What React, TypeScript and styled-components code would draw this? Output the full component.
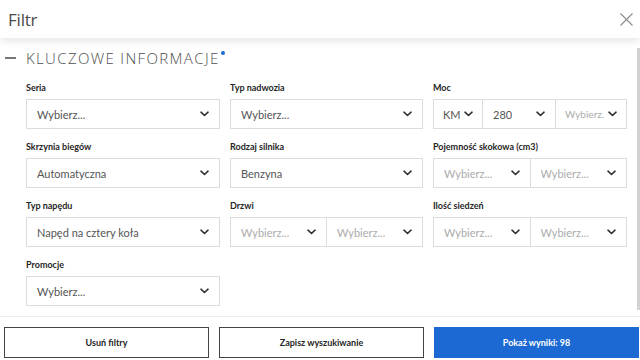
import React from "react";
import styled, { createGlobalStyle } from "styled-components";

const Global = createGlobalStyle`
  html, body { margin: 0; padding: 0; background: #fff; }
  body { font-family: Lato, "Open Sans", "Liberation Sans", sans-serif; color: #333; }
  * { box-sizing: border-box; }
`;

const Modal = styled.div`
  width: 640px;
  height: 360px;
  display: flex;
  flex-direction: column;
  background: #fff;
  overflow: hidden;
`;

const Header = styled.header`
  height: 38px;
  flex: none;
  display: flex;
  align-items: center;
  justify-content: space-between;
  padding: 0 6px 0 8px;
  background: #fff;
  box-shadow: 0 3px 8px rgba(0, 0, 0, 0.1);
  position: relative;
  z-index: 2;
`;

const Title = styled.h1`
  margin: 0;
  font-family: "Open Sans", Lato, sans-serif;
  font-weight: 400;
  font-size: 17px;
  color: #4a4a4a;
  letter-spacing: -0.2px;
`;

const CloseButton = styled.button`
  border: none;
  background: none;
  padding: 0;
  width: 16px;
  height: 16px;
  display: flex;
  align-items: center;
  justify-content: center;
  color: #8a8a8a;
`;

const Body = styled.div`
  flex: 1;
  position: relative;
  min-height: 0;
  display: flex;
`;

const Content = styled.main`
  flex: 1;
  overflow: hidden;
  padding: 10px 0 0 5px;
`;

const ScrollThumb = styled.div`
  position: absolute;
  right: 0;
  top: 10px;
  width: 3px;
  height: 262px;
  background: #d2d2d2;
`;

const SectionTitle = styled.h2`
  margin: 0;
  display: flex;
  align-items: center;
  height: 20px;
  font-family: "Open Sans", Lato, sans-serif;
  font-weight: 300;
  font-size: 15px;
  letter-spacing: 1.35px;
  color: #4d4d4d;
`;

const Dash = styled.span`
  width: 11px;
  height: 1.5px;
  background: #777;
  margin-right: 10px;
`;

const Dot = styled.span`
  width: 4px;
  height: 4px;
  border-radius: 50%;
  background: #1c69d4;
  align-self: flex-start;
  margin-top: 3px;
  margin-left: 1px;
`;

const Grid = styled.div`
  display: grid;
  grid-template-columns: 194px 193px 194px;
  column-gap: 10px;
  row-gap: 11px;
  padding-left: 21px;
  margin-top: 13px;
`;

const Field = styled.div`
  display: flex;
  flex-direction: column;
`;

const Label = styled.label`
  font-size: 9px;
  font-weight: 700;
  line-height: 14px;
  color: #262626;
  margin-bottom: 4px;
`;

const Group = styled.div`
  display: flex;
  height: 30px;
`;

const Select = styled.div<{ $w?: number; $muted?: boolean; $pad?: number; $small?: boolean }>`
  flex: ${(p) => (p.$w ? `0 0 ${p.$w}px` : "1 1 0")};
  min-width: 0;
  height: 30px;
  border: 1px solid #dcdcdc;
  margin-left: -1px;
  &:first-child { margin-left: 0; }
  display: flex;
  align-items: center;
  justify-content: space-between;
  padding: 0 ${(p) => p.$pad ?? 10}px 0 ${(p) => p.$pad ?? 10}px;
  font-size: ${(p) => (p.$small ? 10 : 11)}px;
  color: ${(p) => (p.$muted ? "#ababab" : "#555")};
  background: #fff;
  white-space: nowrap;
  overflow: hidden;
`;

const SelectText = styled.span`
  overflow: hidden;
`;

const Chevron = () => (
  <svg width="9" height="6" viewBox="0 0 9 6" style={{ flex: "none", marginLeft: 4 }}>
    <path d="M1 1.2 L4.5 4.5 L8 1.2" fill="none" stroke="#333" strokeWidth="1.6" strokeLinecap="round" strokeLinejoin="round" />
  </svg>
);

const Footer = styled.footer`
  flex: none;
  height: 44px;
  border-top: 1px solid #ececec;
  display: grid;
  grid-template-columns: 205px 205px 205px;
  column-gap: 10px;
  padding: 10px 3px 3px 4px;
  background: #fff;
`;

const Button = styled.button<{ $primary?: boolean }>`
  height: 31px;
  border: ${(p) => (p.$primary ? "1px solid #1c69d4" : "1.5px solid #444")};
  background: ${(p) => (p.$primary ? "#1c69d4" : "#fff")};
  color: ${(p) => (p.$primary ? "#fff" : "#262626")};
  font-family: Lato, "Open Sans", sans-serif;
  font-weight: 700;
  font-size: 9px;
  cursor: pointer;
`;

type Opt = { text: string; muted?: boolean; w?: number; pad?: number; small?: boolean };

const SelectBox = ({ text, muted, w, pad, small }: Opt) => (
  <Select $w={w} $muted={muted} $pad={pad} $small={small}>
    <SelectText>{text}</SelectText>
    <Chevron />
  </Select>
);

const fields: { label: string; opts: Opt[] }[] = [
  { label: "Seria", opts: [{ text: "Wybierz..." }] },
  { label: "Typ nadwozia", opts: [{ text: "Wybierz..." }] },
  {
    label: "Moc",
    opts: [
      { text: "KM", w: 50, pad: 9 },
      { text: "280", w: 74 },
      { text: "Wybierz.", muted: true, pad: 9, small: true },
    ],
  },
  { label: "Skrzynia biegów", opts: [{ text: "Automatyczna" }] },
  { label: "Rodzaj silnika", opts: [{ text: "Benzyna" }] },
  {
    label: "Pojemność skokowa (cm3)",
    opts: [
      { text: "Wybierz...", muted: true },
      { text: "Wybierz...", muted: true },
    ],
  },
  { label: "Typ napędu", opts: [{ text: "Napęd na cztery koła" }] },
  {
    label: "Drzwi",
    opts: [
      { text: "Wybierz...", muted: true },
      { text: "Wybierz...", muted: true },
    ],
  },
  {
    label: "Ilość siedzeń",
    opts: [
      { text: "Wybierz...", muted: true },
      { text: "Wybierz...", muted: true },
    ],
  },
  { label: "Promocje", opts: [{ text: "Wybierz..." }] },
];

export default function App() {
  return (
    <>
      <Global />
      <Modal>
        <Header>
          <Title>Filtr</Title>
          <CloseButton aria-label="Zamknij">
            <svg width="13" height="13" viewBox="0 0 13 13">
              <path d="M0.5 0.5 L12.5 12.5 M12.5 0.5 L0.5 12.5" stroke="#8a8a8a" strokeWidth="1.1" />
            </svg>
          </CloseButton>
        </Header>
        <Body>
          <Content>
            <SectionTitle>
              <Dash />
              KLUCZOWE INFORMACJE
              <Dot />
            </SectionTitle>
            <Grid>
              {fields.map((f) => (
                <Field key={f.label}>
                  <Label>{f.label}</Label>
                  <Group>
                    {f.opts.map((o, i) => (
                      <SelectBox key={i} {...o} />
                    ))}
                  </Group>
                </Field>
              ))}
            </Grid>
          </Content>
          <ScrollThumb />
        </Body>
        <Footer>
          <Button>Usuń filtry</Button>
          <Button>Zapisz wyszukiwanie</Button>
          <Button $primary>Pokaż wyniki: 98</Button>
        </Footer>
      </Modal>
    </>
  );
}
